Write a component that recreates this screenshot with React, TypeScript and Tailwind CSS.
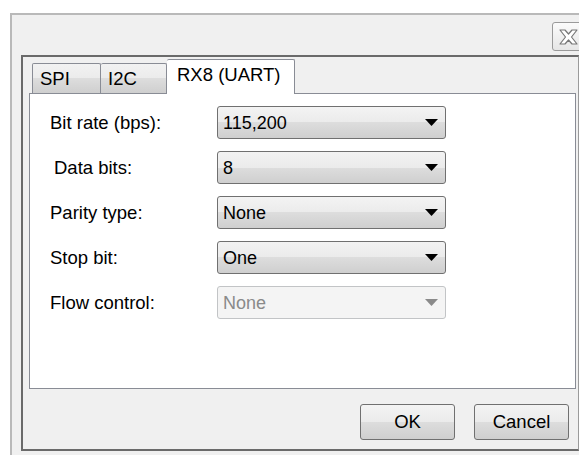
import React, { useState } from "react";

const font = { fontFamily: '"Liberation Sans", Arial, sans-serif' };

interface Field {
  label: string;
  value: string;
  indent?: boolean;
  disabled?: boolean;
}

const fields: Field[] = [
  { label: "Bit rate (bps):", value: "115,200" },
  { label: "Data bits:", value: "8", indent: true },
  { label: "Parity type:", value: "None" },
  { label: "Stop bit:", value: "One" },
  { label: "Flow control:", value: "None", disabled: true },
];

function Combo({ value, disabled }: { value: string; disabled?: boolean }) {
  return (
    <div
      className={`flex h-[33px] w-[229px] items-center justify-between rounded-[3px] border pl-[5px] pr-[7px] ${
        disabled
          ? "border-[#c2c4c6] bg-[#f4f4f4] text-[#8a8a8a]"
          : "border-[#707070] bg-[linear-gradient(#f3f3f3,#ebebeb_50%,#dddddd_50%,#cfcfcf)] text-black"
      }`}
    >
      <span className="text-[18px] leading-none">{value}</span>
      <svg width="13" height="7" viewBox="0 0 13 7">
        <path d="M0 0h13L6.5 7z" fill={disabled ? "#8a8a8a" : "#000"} />
      </svg>
    </div>
  );
}

function Tab({
  label,
  active,
  className,
  onClick,
}: {
  label: string;
  active: boolean;
  className: string;
  onClick: () => void;
}) {
  return (
    <button
      onClick={onClick}
      className={`${className} flex items-center rounded-t-[2px] border-t border-r border-b-0 border-[#898c95] text-[18.5px] text-black ${
        active
          ? "relative z-10 -mb-px h-[35px] bg-white pb-[4px]"
          : "h-[30px] bg-[linear-gradient(#f2f2f2,#ebebeb_50%,#dddddd_50%,#cfcfcf)] pt-[1px]"
      }`}
    >
      {label}
    </button>
  );
}

export default function App() {
  const [tab, setTab] = useState("uart");

  return (
    <div className="h-[455px] w-[579px] overflow-hidden bg-white" style={font}>
      <div className="ml-[10px] mt-[13px] h-[442px] w-[600px] border-l-2 border-t-2 border-l-[#b9b9b9] border-t-[#b9b9b9] bg-[#f0f0f0]">
        {/* title bar close box */}
        <div className="flex h-[40px] w-[572px] items-start justify-end pt-[7px]">
          <div className="flex h-[29px] w-[32px] items-center justify-center rounded-[3px] border border-[#9a9a9a] bg-[linear-gradient(#fbfbfb,#e6e6e6)]">
            <svg width="19" height="16" viewBox="0 0 19 16">
              <path
                d="M1 1h5l3.5 4L13 1h5l-5.5 7L18 15h-5l-3.5-4L6 15H1l5.5-7z"
                fill="#fff"
                stroke="#767676"
                strokeWidth="1.2"
                strokeLinejoin="round"
              />
            </svg>
          </div>
        </div>

        {/* group frame */}
        <div className="ml-[9px] h-[396px] w-[558px] border-l-2 border-t-2 border-b-2 border-r border-[#6a6a6a] border-r-[#9a9a9a] pl-[6px] pt-[2px]">
          <div className="flex h-[34px] items-end pl-[3px]">
            <Tab
              label="SPI"
              className="w-[69px] border-l pl-[7px]"
              active={tab === "spi"}
              onClick={() => setTab("spi")}
            />
            <Tab
              label="I2C"
              className="w-[66px] pl-[7px]"
              active={tab === "i2c"}
              onClick={() => setTab("i2c")}
            />
            <Tab
              label="RX8 (UART)"
              className="w-[128px] pl-[10px]"
              active={tab === "uart"}
              onClick={() => setTab("uart")}
            />
          </div>

          <div className="h-[296px] w-[547px] border border-[#898c95] bg-white pt-[12px]">
            <div className="flex flex-col gap-[12px]">
              {fields.map((f) => (
                <div key={f.label} className="flex items-center">
                  <span
                    className={`w-[187px] text-[18.5px] text-black ${
                      f.indent ? "pl-[24px]" : "pl-[20px]"
                    }`}
                  >
                    {f.label}
                  </span>
                  <Combo value={f.value} disabled={f.disabled} />
                </div>
              ))}
            </div>
          </div>

          <div className="mt-[15px] flex w-[547px] justify-end gap-[19px] pr-[7px]">
            <button className="h-[36px] w-[95px] rounded-[3px] border border-[#707070] bg-[linear-gradient(#f3f3f3,#ebebeb_50%,#dddddd_50%,#cfcfcf)] text-[18.5px] text-black">
              OK
            </button>
            <button className="h-[36px] w-[95px] rounded-[3px] border border-[#707070] bg-[linear-gradient(#f3f3f3,#ebebeb_50%,#dddddd_50%,#cfcfcf)] text-[18.5px] text-black">
              Cancel
            </button>
          </div>
        </div>
      </div>
    </div>
  );
}
